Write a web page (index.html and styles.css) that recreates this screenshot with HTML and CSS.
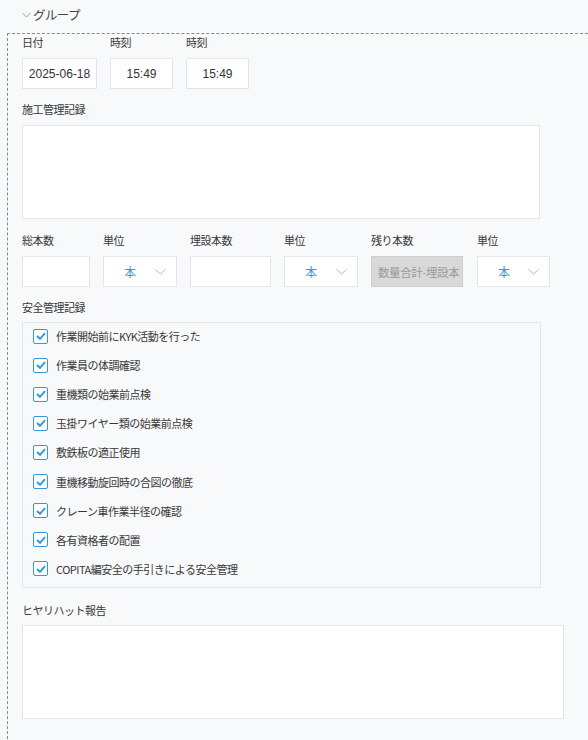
FILE: index.html
```html
<!DOCTYPE html>
<html lang="ja">
<head>
<meta charset="utf-8">
<title>グループ</title>
<link rel="stylesheet" href="styles.css">
</head>
<body>
<div class="group-header">
  <svg class="group-chevron" width="9" height="6" viewBox="0 0 9 6"><path d="M0.5 1 L4.5 5 L8.5 1" fill="none" stroke="#9aa0a6" stroke-width="1"/></svg>
  <span class="group-title">グループ</span>
</div>
<div class="group">
  <div class="row row-1">
    <div class="field">
      <div class="label">日付</div>
      <div class="input w-date">2025-06-18</div>
    </div>
    <div class="field">
      <div class="label">時刻</div>
      <div class="input w-time">15:49</div>
    </div>
    <div class="field">
      <div class="label">時刻</div>
      <div class="input w-time">15:49</div>
    </div>
  </div>

  <div class="field block gap-ta1">
    <div class="label">施工管理記録</div>
    <textarea class="textarea w-ta1"></textarea>
  </div>

  <div class="row row-3">
    <div class="field">
      <div class="label">総本数</div>
      <div class="input w-total"></div>
    </div>
    <div class="field">
      <div class="label">単位</div>
      <div class="select w-sel"><span class="sel-text">本</span><svg width="11" height="6" viewBox="0 0 11 6"><path d="M0.5 0.5 L5.5 5 L10.5 0.5" fill="none" stroke="#8fbde6" stroke-width="1"/></svg></div>
    </div>
    <div class="field">
      <div class="label">埋設本数</div>
      <div class="input w-buried"></div>
    </div>
    <div class="field">
      <div class="label">単位</div>
      <div class="select w-sel"><span class="sel-text">本</span><svg width="11" height="6" viewBox="0 0 11 6"><path d="M0.5 0.5 L5.5 5 L10.5 0.5" fill="none" stroke="#8fbde6" stroke-width="1"/></svg></div>
    </div>
    <div class="field">
      <div class="label">残り本数</div>
      <div class="input disabled w-rest"><span class="clip">数量合計-埋設本</span></div>
    </div>
    <div class="field field-last">
      <div class="label">単位</div>
      <div class="select w-sel3"><span class="sel-text">本</span><svg width="11" height="6" viewBox="0 0 11 6"><path d="M0.5 0.5 L5.5 5 L10.5 0.5" fill="none" stroke="#8fbde6" stroke-width="1"/></svg></div>
    </div>
  </div>

  <div class="field block gap-checks">
    <div class="label label-tight">安全管理記録</div>
    <div class="checks">
      <div class="check"><span class="box"><svg width="10" height="8" viewBox="0 0 10 8"><path d="M1 4 L4 6.8 L9 1.2" fill="none" stroke="#3498db" stroke-width="2"/></svg></span><span class="check-text">作業開始前にKYK活動を行った</span></div>
      <div class="check"><span class="box"><svg width="10" height="8" viewBox="0 0 10 8"><path d="M1 4 L4 6.8 L9 1.2" fill="none" stroke="#3498db" stroke-width="2"/></svg></span><span class="check-text">作業員の体調確認</span></div>
      <div class="check"><span class="box"><svg width="10" height="8" viewBox="0 0 10 8"><path d="M1 4 L4 6.8 L9 1.2" fill="none" stroke="#3498db" stroke-width="2"/></svg></span><span class="check-text">重機類の始業前点検</span></div>
      <div class="check"><span class="box"><svg width="10" height="8" viewBox="0 0 10 8"><path d="M1 4 L4 6.8 L9 1.2" fill="none" stroke="#3498db" stroke-width="2"/></svg></span><span class="check-text">玉掛ワイヤー類の始業前点検</span></div>
      <div class="check"><span class="box"><svg width="10" height="8" viewBox="0 0 10 8"><path d="M1 4 L4 6.8 L9 1.2" fill="none" stroke="#3498db" stroke-width="2"/></svg></span><span class="check-text">敷鉄板の適正使用</span></div>
      <div class="check"><span class="box"><svg width="10" height="8" viewBox="0 0 10 8"><path d="M1 4 L4 6.8 L9 1.2" fill="none" stroke="#3498db" stroke-width="2"/></svg></span><span class="check-text">重機移動旋回時の合図の徹底</span></div>
      <div class="check"><span class="box"><svg width="10" height="8" viewBox="0 0 10 8"><path d="M1 4 L4 6.8 L9 1.2" fill="none" stroke="#3498db" stroke-width="2"/></svg></span><span class="check-text">クレーン車作業半径の確認</span></div>
      <div class="check"><span class="box"><svg width="10" height="8" viewBox="0 0 10 8"><path d="M1 4 L4 6.8 L9 1.2" fill="none" stroke="#3498db" stroke-width="2"/></svg></span><span class="check-text">各有資格者の配置</span></div>
      <div class="check"><span class="box"><svg width="10" height="8" viewBox="0 0 10 8"><path d="M1 4 L4 6.8 L9 1.2" fill="none" stroke="#3498db" stroke-width="2"/></svg></span><span class="check-text">COPITA編安全の手引きによる安全管理</span></div>
    </div>
  </div>

  <div class="field block">
    <div class="label label-tight">ヒヤリハット報告</div>
    <textarea class="textarea w-ta2"></textarea>
  </div>
</div>
</body>
</html>
```
FILE: styles.css
```css
html, body {
  margin: 0;
  padding: 0;
  background: #f8f9fa;
}
body {
  font-family: "Noto Sans CJK JP", "Liberation Sans", sans-serif;
  font-size: 11px;
  color: #383838;
  height: 740px;
  overflow: hidden;
}
.group-header {
  height: 33px;
  display: flex;
  align-items: center;
  padding-left: 22px;
  box-sizing: border-box;
  padding-bottom: 5px;
}
.group-chevron {
  margin-right: 2px;
  margin-top: 1px;
}
.group-title {
  font-size: 12.5px;
  letter-spacing: -0.6px;
  color: #444;
}
.group {
  margin-left: 7px;
  border-top: 1px dashed #8a8a8a;
  border-left: 1px dashed #8a8a8a;
  padding: 0 0 0 14px;
  min-height: 720px;
}
.row {
  display: flex;
  gap: 13px;
}
.field-last { margin-left: 1px; }
.row-1 { margin-bottom: 12px; }
.gap-ta1 { margin-bottom: 13px; }
.row-3 { margin-bottom: 12px; }
.gap-checks { margin-bottom: 14px; }
.label {
  height: 16px;
  line-height: 16px;
  margin-bottom: 8px;
  letter-spacing: -0.5px;
  white-space: nowrap;
}
.label-tight { margin-bottom: 7px; }
.input, .select, .textarea {
  box-sizing: border-box;
  background: #fff;
  border: 1px solid #e3e7e8;
}
.input {
  height: 31px;
  display: flex;
  align-items: center;
  justify-content: center;
  font-family: "Liberation Sans", sans-serif;
  font-size: 12px;
  color: #333;
}
.w-date { width: 75px; }
.w-time { width: 63px; }
.w-total { width: 68px; }
.w-buried { width: 81px; }
.w-rest { width: 92px; }
.w-sel { width: 74px; }
.w-sel3 { width: 73px; }
.disabled {
  background: #d9d9d9;
  border-color: #cfcfcf;
  justify-content: flex-start;
  padding-left: 6px;
  overflow: hidden;
}
.clip {
  white-space: nowrap;
  font-family: "Noto Sans CJK JP", sans-serif;
  font-size: 11.5px;
  letter-spacing: -0.4px;
  color: #9a9a9a;
}
.select {
  height: 31px;
  display: flex;
  align-items: center;
  justify-content: space-between;
  padding: 0 10px 0 20px;
}
.sel-text {
  color: #3498db;
  font-size: 12px;
}
.textarea {
  display: block;
  resize: none;
  margin: 0;
  padding: 0;
  outline: none;
  height: 94px;
}
.w-ta1 { width: 518px; }
.w-ta2 { width: 542px; }
.checks {
  box-sizing: border-box;
  width: 519px;
  height: 266px;
  border: 1px solid #e3e7e8;
  background: #f8f9fa;
  padding: 0 0 0 10px;
}
.check {
  box-sizing: border-box;
  height: 29.1px;
  padding-bottom: 3px;
  display: flex;
  align-items: center;
}
.box {
  box-sizing: border-box;
  width: 15px;
  height: 15px;
  border: 1.5px solid #3498db;
  border-radius: 2px;
  background: #fff;
  display: flex;
  align-items: center;
  justify-content: center;
  margin-right: 8px;
  flex: none;
}
.check-text {
  letter-spacing: -0.5px;
  white-space: nowrap;
}
```
